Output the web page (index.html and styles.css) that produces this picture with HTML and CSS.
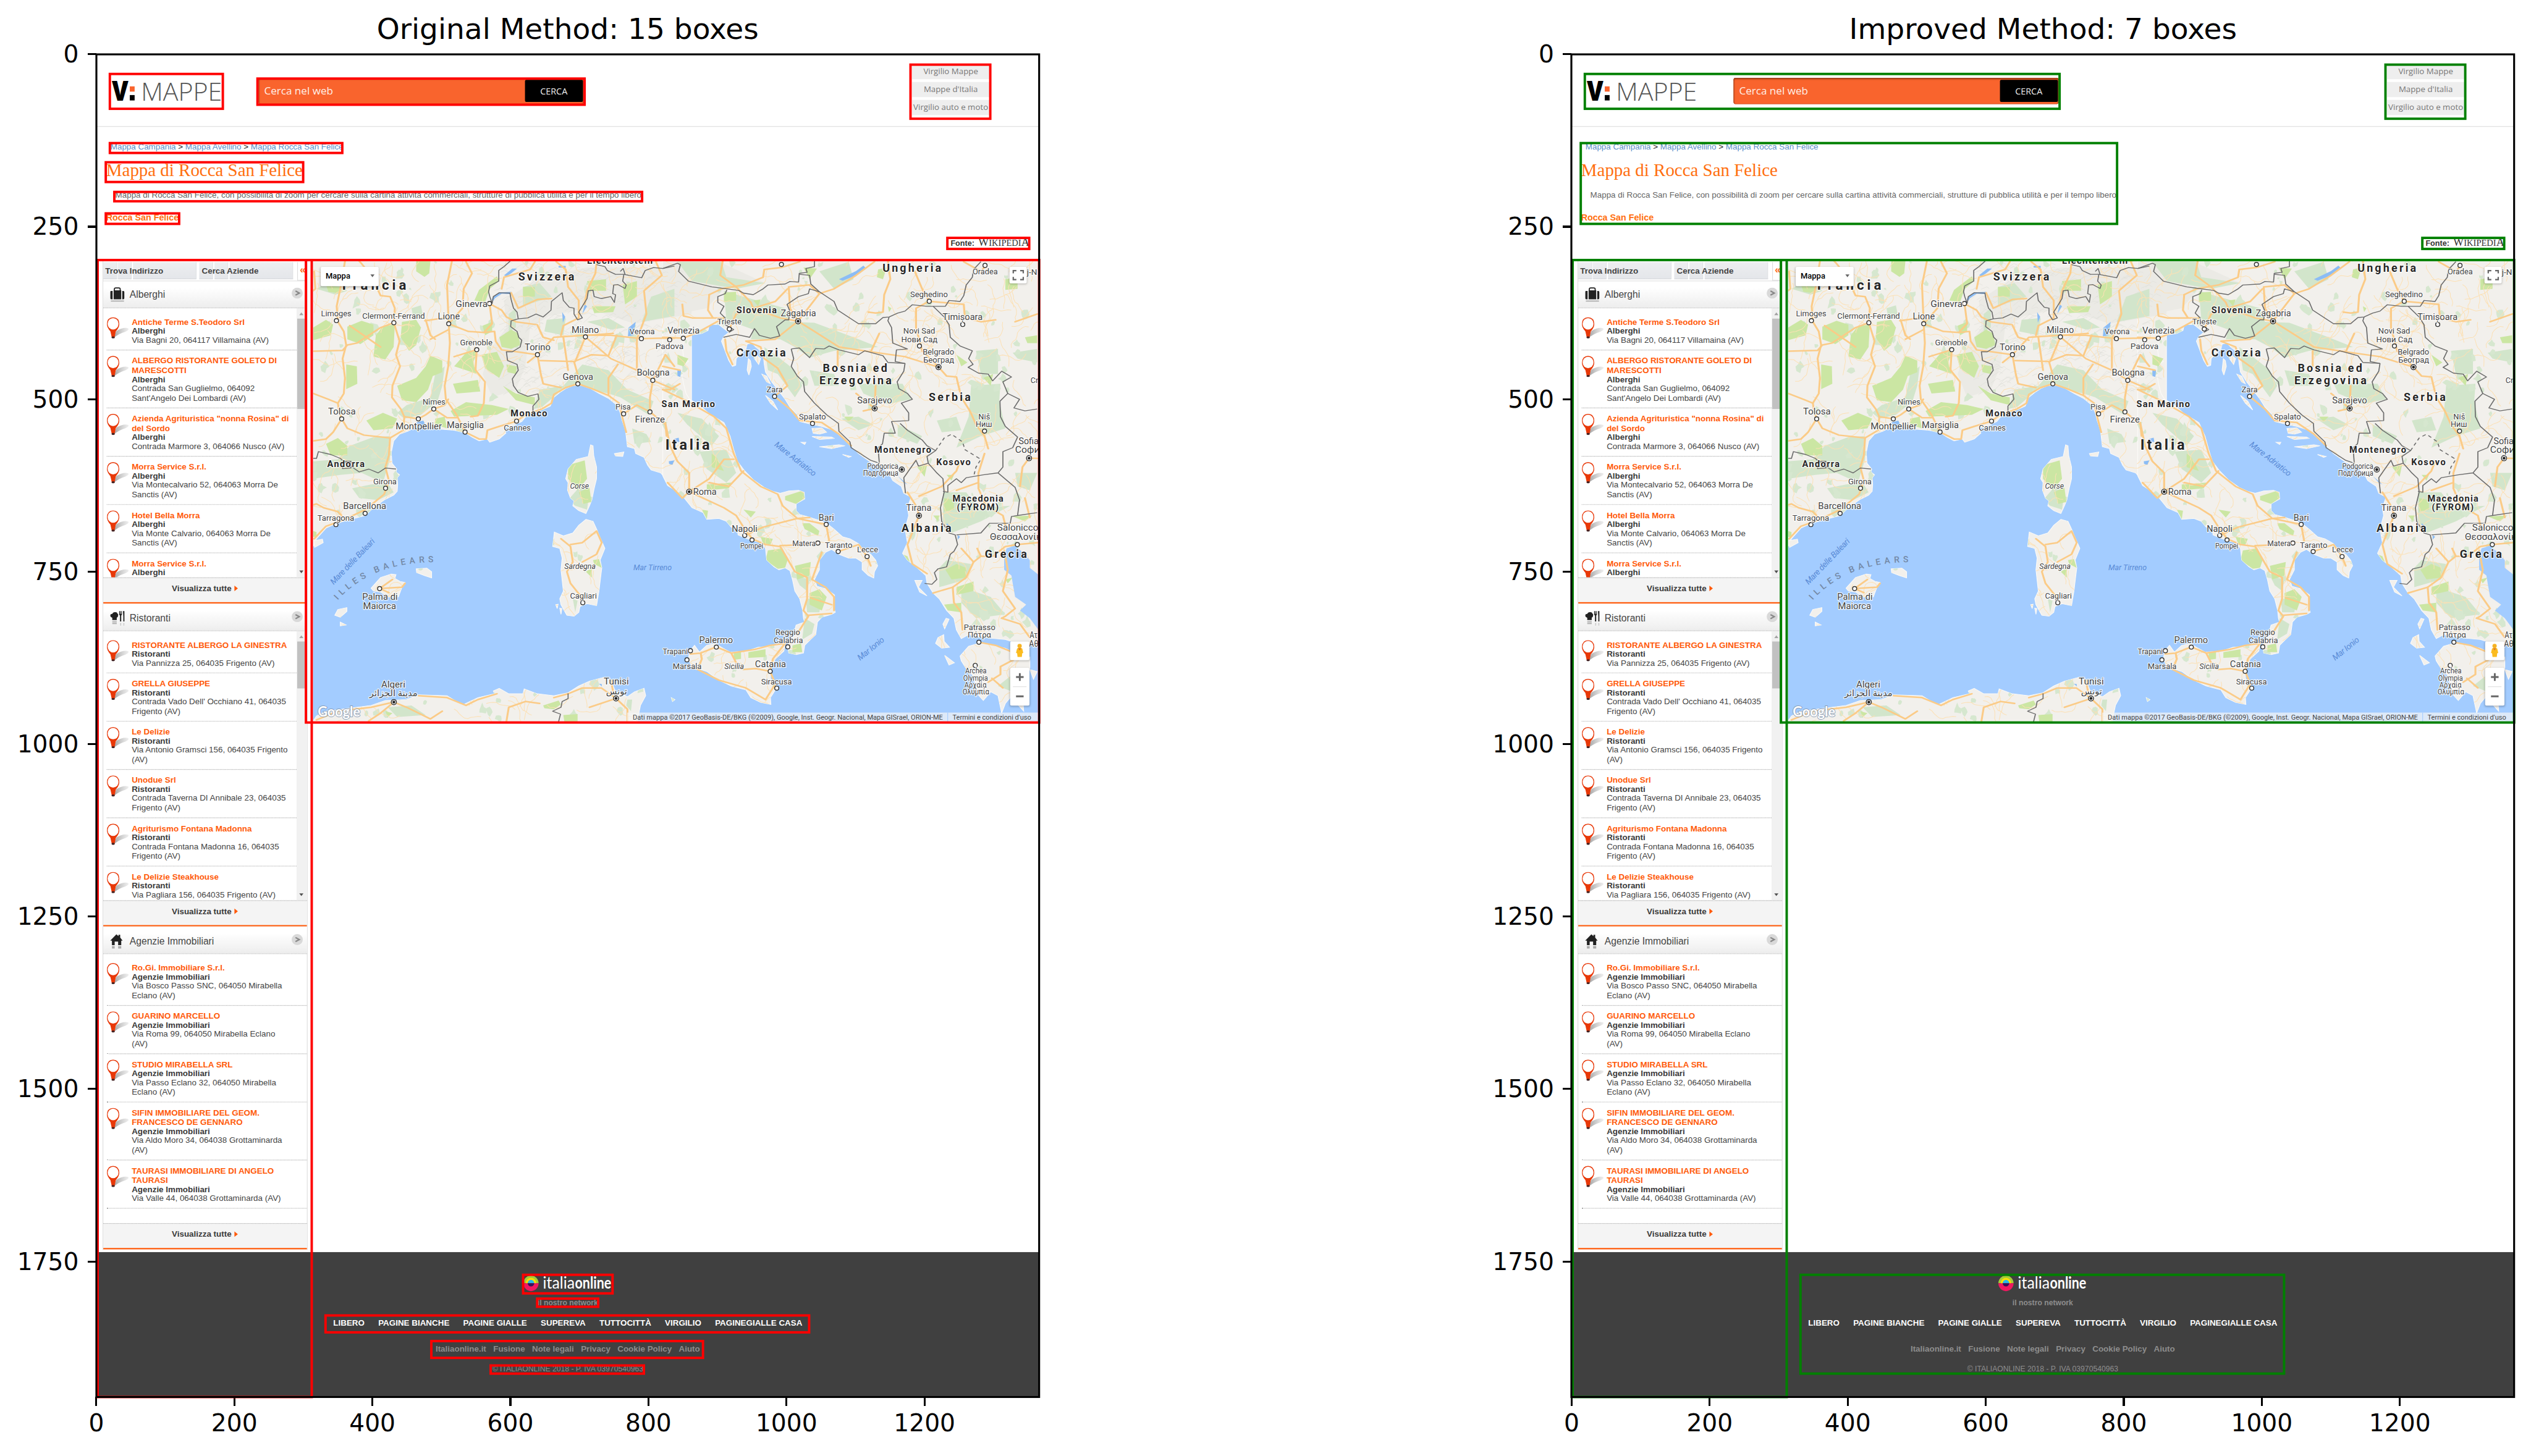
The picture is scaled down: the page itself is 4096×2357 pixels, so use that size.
FILE: index.html
```html
<!DOCTYPE html>
<html lang="en">
<head>
<meta charset="utf-8">
<title>Box detection comparison</title>
<link rel="stylesheet" href="styles.css">
</head>
<body>
<main class="figure" id="figure"></main>

<template id="chart-template">
  <section class="chart">
    <h1 class="chart-title"></h1>
    <div class="y-axis"></div>
    <div class="plot">
      <div class="page">
        <header class="site-header">
          <svg class="brand" viewBox="0 0 164 34" width="164" height="34">
            <text class="brand-v" x="0.4" y="30.9" textLength="24" lengthAdjust="spacingAndGlyphs">V</text>
            <rect x="26.4" y="10.4" width="7" height="7.6" fill="#fa642d"/>
            <rect x="26.4" y="23" width="7" height="7.8"/>
            <text class="brand-name" x="42.6" y="30.9" textLength="117.4" lengthAdjust="spacingAndGlyphs">MAPPE</text>
          </svg>
          <div class="search"><span class="search-text">Cerca nel web</span><span class="search-button">CERCA</span></div>
          <nav class="top-links"><a>Virgilio Mappe</a><a>Mappe d'Italia</a><a>Virgilio auto e moto</a></nav>
        </header>
        <section class="intro">
          <p class="crumbs"><a>Mappa Campania</a> &gt; <a>Mappa Avellino</a> &gt; <a>Mappa Rocca San Felice</a></p>
          <h2>Mappa di Rocca San Felice</h2>
          <p class="summary">Mappa di Rocca San Felice, con possibilità di zoom per cercare sulla cartina attività commerciali, strutture di pubblica utilità e per il tempo libero.</p>
          <p class="place">Rocca San Felice</p>
          <p class="source"><b>Fonte:</b><span class="wiki"><big>W</big>IKIPEDI<big>A</big></span></p>
        </section>
        <div class="content">
          <aside class="sidebar">
            <div class="tabs">
              <div class="tab"><i></i><i></i><i></i><span>Trova Indirizzo</span></div>
              <div class="tab"><i></i><i></i><i></i><span>Cerca Aziende</span></div>
              <div class="collapse">«</div>
            </div>
            <div class="groups"></div>
          </aside>
          <div class="map"></div>
        </div>
        <footer class="site-footer">
          <svg class="io-logo" viewBox="0 0 130 24" width="130" height="24">
            <path d="M0.7 11a11 11 0 0 1 22 0z" fill="#a4cc39"/><path d="M0.7 11a11 11.6 0 0 0 22 0z" fill="#f01860"/>
            <path d="M4.2 11a7.5 7.5 0 0 1 15 0z" fill="#ffe000"/><path d="M6.9 11a4.8 4.8 0 0 1 9.6 0z" fill="#25b9ea"/>
            <path d="M6.9 11a4.8 4.8 0 0 0 9.6 0z" fill="#33145a"/>
            <text x="29" y="18.8" textLength="46" lengthAdjust="spacingAndGlyphs" font-weight="400">italia</text>
            <text x="75.500" y="18.8" textLength="52.500" lengthAdjust="spacingAndGlyphs" font-weight="700">online</text>
          </svg>
          <p class="network">il nostro network</p>
          <nav class="portals"><a>LIBERO</a><a>PAGINE BIANCHE</a><a>PAGINE GIALLE</a><a>SUPEREVA</a><a>TUTTOCITTÀ</a><a>VIRGILIO</a><a>PAGINEGIALLE CASA</a></nav>
          <nav class="legal"><a>Italiaonline.it</a><a>Fusione</a><a>Note legali</a><a>Privacy</a><a>Cookie Policy</a><a>Aiuto</a></nav>
          <p class="copyright">© ITALIAONLINE 2018 - P. IVA 03970540963</p>
        </footer>
      </div>
      <svg class="boxes" viewBox="0 0 1366 1946"></svg>
    </div>
    <div class="x-axis"></div>
  </section>
</template>
<script src="app.js"></script>
</body>
</html>
```
FILE: styles.css
```css
* { box-sizing: border-box; }
body { margin: 0; background: #fff; color: #000; font-family: "DejaVu Sans", sans-serif; overflow: hidden; }
p, h1, h2 { margin: 0; font-weight: 400; }

/* figure and axes */
.figure { width: 4096px; height: 2357px; display: flex; gap: 706px; overflow: hidden; }
.chart { flex: none; display: grid; grid-template: 87.8px 2173.5px 95px / 155.9px 1525.7px; }
.chart-title { grid-column: 2; font-size: 47.06px; line-height: 56px; padding-top: 19px; text-align: center; white-space: nowrap; }
.y-axis { grid-column: 1; grid-row: 2; display: flex; flex-direction: column; margin-top: -139.6px; }
.y-axis span { flex: none; height: 279.2px; display: flex; align-items: center; justify-content: flex-end; gap: 14.500px; font-size: 39.2px; }
.y-axis span::after { content: ""; width: 14px; height: 3.1px; background: #000; }
.plot { grid-column: 2; grid-row: 2; position: relative; }
.x-axis { grid-column: 2; grid-row: 3; display: flex; margin-left: -111.7px; }
.x-axis span { flex: none; width: 223.38px; display: flex; flex-direction: column; align-items: center; font-size: 39.2px; line-height: 46px; gap: 5px; }
.x-axis span::before { content: ""; width: 3.1px; height: 15px; background: #000; }
.boxes { position: absolute; left: 0; top: 0; width: 1525.7px; height: 2173.5px; overflow: visible; }
.boxes rect { fill: none; stroke-width: 3.5; }
.boxes .original { stroke: #f00; }
.boxes .improved { stroke: #008000; }
.boxes .spine { stroke: #000; stroke-width: 2.8; }

/* captured page */
.page { width: 1366px; height: 1946px; overflow: hidden; transform: scale(1.1169); transform-origin: 0 0; font-family: "Liberation Sans", Arial, sans-serif; font-size: 12px; line-height: 14px; }
.site-header { height: 105px; border-bottom: 1px solid #dedede; display: flex; align-items: flex-start; font-family: "Open Sans", sans-serif; }
.brand { margin: 36px 0 0 22px; flex: none; }
.brand-v { font: 800 39px "Open Sans", sans-serif; }
.brand-name { font: 300 36.5px "Open Sans", sans-serif; fill: #555; }
.search { margin: 34px 0 0 49px; width: 471px; height: 38px; border-radius: 3px; background: #f9642d; box-shadow: inset 0 2px 2px #9c3c17, inset 1px 0 1px #b24a20, inset -1px 0 1px #b24a20; display: flex; padding: 2.8px 1px 0 8px; justify-content: space-between; }
.search-text { color: #fff0e8; font-size: 15.3px; line-height: 31.500px; }
.search-button { width: 84.5px; height: 32.6px; background: #000; color: #eee; border-radius: 2px; font-size: 12.9px; line-height: 32.500px; text-align: center; }
.top-links { margin: 14px 72.4px 0 auto; width: 111.4px; display: flex; flex-direction: column; gap: 3.6px; }
.top-links a { height: 22.4px; background: #eee; color: #777; font-size: 11.9px; line-height: 21.800px; text-align: center; white-space: nowrap; }
.intro { height: 194px; padding-top: 22.2px; white-space: nowrap; }
.crumbs { padding-left: 20.4px; color: #222; }
.crumbs a { color: #5c8fc8; }
.intro h2 { margin: 12.3px 0 0 14.2px; font: 25.9px/30px "Liberation Serif", serif; color: #ff6f0f; }
.summary { margin: 13.7px 0 0 27.4px; color: #666; }
.place { margin: 19.2px 0 0 14px; font-size: 12.8px; font-weight: 700; color: #ff6f0f; }
.source { margin: 21.2px 14.2px 0 0; height: 16px; display: flex; justify-content: flex-end; align-items: baseline; gap: 5.500px; font-size: 11.3px; color: #333; }
.wiki { font: 13px/14px "Liberation Serif", serif; }
.wiki big { font-size: 16.300px; line-height: 14px; }

/* sidebar */
.content { height: 1436.5px; display: flex; }
.sidebar { margin-left: 8.5px; width: 297px; height: 1434px; flex: none; border: solid #ddd; border-width: 0 1.3px 0 1px; }
.tabs { height: 30px; display: flex; gap: 4.2px; padding-top: 2px; border-bottom: 1.5px solid #ddd; font-weight: 700; color: #444; }
.tab { position: relative; height: 25.4px; width: 135.7px; display: flex; gap: 1.9px; }
.tab i { width: 20px; background: linear-gradient(#edeef0, #e4e6ea); border-right: 1px solid #dcdee2; border-bottom: 1px solid #d6d8dc; }
.tab i:nth-child(3) { flex: 1; }
.tab span { position: absolute; left: 3.3px; top: 6.2px; white-space: nowrap; }
.collapse { margin-left: 1.500px; flex: 1; border-left: 1px solid #ddd; border-bottom: 1px solid #ddd; color: #ff6a1a; font-size: 15px; line-height: 22px; padding-left: 3px; }
.group-head { height: 39.8px; display: flex; align-items: center; background: linear-gradient(#fff 25%, #ededed); border-bottom: 1px dotted #aaa; padding: 4px 5.8px 0 10.2px; font-size: 14px; color: #444; }
section:first-child > .group-head { height: 38.5px; padding-top: 1.4px; }
.group-head svg { flex: none; }
.group-head .ico { margin-right: 7.500px; }
.group-head .go { margin: -5px 0 0 auto; }
.list { height: 390.4px; overflow: hidden; padding-left: 5.4px; display: flex; }
.items { flex: 1; padding-top: 5.2px; }
.item { display: flex; gap: 4px; padding: 8px 0 7px; border-bottom: 1px dotted #aaa; white-space: nowrap; color: #444; }
.item svg { flex: none; margin: 0.5px 0 -20px 0; }
.item b { display: block; color: #ff5a0a; }
.item strong { display: block; line-height: 12px; color: #3a3a3a; }
.scroll { width: 14.6px; flex: none; background: #f1f1f1; display: flex; flex-direction: column; align-items: center; padding: 6.5px 0 6px; }
.scroll::before { content: ""; border: solid transparent; border-width: 0 3.500px 4px; border-bottom-color: #a3a3a3; }
.scroll::after { content: ""; margin-top: auto; border: solid transparent; border-width: 4px 3.500px 0; border-top-color: #505050; }
.scroll i { margin-top: 4.500px; width: 12.8px; background: #c1c1c1; }
.more { height: 37.9px; background: #f4f4f4; border-top: 1px dotted #aaa; border-bottom: 2px solid #ff5a0a; display: flex; justify-content: center; align-items: center; gap: 4px; padding: 0 0 5.500px 0; font-weight: 700; color: #3a3a3a; }
.more::after { content: ""; border: solid transparent; border-width: 4px 0 4px 5px; border-left-color: #ff5a0a; }

/* map */
.map { position: relative; margin-left: 8.8px; width: 1051.7px; height: 668px; overflow: hidden; background: #a3ccff; }
.map > svg { display: block; }
.land { fill: #f2f0ec; stroke: #fbfaf8; stroke-width: 3; }
.park { fill: #cbe6a3; }
.wood { fill: #d2e5cb; }
.relief { fill: #ebeae5; }
.lake { fill: #8bbcf5; }
.lane { fill: none; stroke: #fce0b4; stroke-width: .9; }
.speck { fill: #d6e7cf; }
.shade { fill: none; stroke: #e0dfda; stroke-width: 2; }
.road { fill: none; stroke: #fbcb87; stroke-width: 8; stroke-linejoin: round; stroke-linecap: round; }
.border { fill: none; stroke: #6b6b6b; stroke-width: 4.300; stroke-linejoin: round; }
.dashed { stroke-dasharray: 16 14; }
.city { fill: #fff; stroke: #333; stroke-width: 1.3; }
.label { font-family: Roboto, "DejaVu Sans", sans-serif; fill: #444; stroke: #fff; stroke-width: 2.2; stroke-opacity: .85; paint-order: stroke; stroke-linejoin: round; }
.label.bold { font-weight: 700; fill: #262626; }
.label.ital { font-style: italic; }
.label.sea { font-style: italic; fill: #5a8bd6; stroke: none; }
.label.arc { fill: #7388a5; stroke: none; font-weight: 500; }
.label.logo { fill: #fff; stroke: #7f93ad; stroke-width: 1.800; font-family: Lato, sans-serif; font-weight: 700; }
.ctl { position: absolute; background: #fff; border-radius: 2px; box-shadow: 0 1px 3px rgba(0,0,0,.25); font-family: Roboto, sans-serif; }
.ctl svg { display: block; }
.type { left: 10.4px; top: 8.6px; width: 84.6px; height: 28px; display: flex; align-items: center; justify-content: space-between; padding: 0 6px 1px 7.500px; font-size: 11.6px; font-weight: 500; }
.type::after { content: ""; border: solid transparent; border-width: 4.200px 3.800px 0; border-top-color: #666; }
.full { left: 1008.7px; top: 8.6px; width: 25.2px; height: 24px; }
.peg { left: 1010.1px; top: 551.6px; width: 27.7px; height: 27.6px; }
.zoom { left: 1010.1px; top: 589.8px; width: 27.7px; height: 54.8px; }
.credits { position: absolute; right: 0; bottom: 0; width: 597px; height: 12.8px; display: flex; background: rgba(245,245,245,.7); font: 9.9px/13px Roboto, sans-serif; color: #444; white-space: nowrap; }
.credits span { width: 465.500px; text-align: right; padding-right: 7px; border-right: 1px solid #a3ccff; }
.credits em { flex: 1; font-style: normal; padding-left: 6px; }

/* footer */
.site-footer { height: 211px; background: #404040; color: #8d8d8d; display: flex; flex-direction: column; align-items: center; padding-top: 34.500px; white-space: nowrap; }
.io-logo { flex: none; }
.io-logo text { font-family: Lato, sans-serif; font-size: 23.500px; fill: #fff; }
.network { margin-top: 7.5px; font-size: 10.9px; font-weight: 700; }
.portals { margin-top: 16.500px; display: flex; gap: 19.900px; font-weight: 700; color: #fff; }
.legal { margin-top: 23px; display: flex; gap: 10.200px; font-weight: 700; }
.copyright { margin-top: 15.400px; font-size: 10.9px; }
```
FILE: app.js
```js
/* ---- sidebar data ---- */
const ICONS = {
  bag: '<svg class="ico" width="21" height="23" viewBox="0 0 21 23"><path d="M6 6V3.500Q6 1.500 8 1.500h4.500q2 0 2 2V6" fill="none" stroke="#222" stroke-width="1.600"/><path d="M1 6h2.500v12H1.500Q0 18 0 16V7.500Q0 6 1 6zM5 5h11v13H5zM17.500 6H19q1.500 0 1.500 1.500V16q0 2-1.500 2h-1.500z" fill="#222"/><path d="M1 20.500h19" stroke="#aaa" stroke-width="1.500"/></svg>',
  food: '<svg class="ico" width="21" height="23" viewBox="0 0 21 23"><path d="M3 14V10.500Q0 9.500 0 7.500 0 5 3 5 4 2 7 2.500q3-.5 3.500 2Q12 5 11.500 7.500q0 2-2 3V14z" fill="#222"/><path d="M13 1v5l1.200 1.500V16h1.800V7.500L17 6V1h-.8v4h-.6V1h-.8v4h-.6V1zM18.500 1h2.200v15h-1.700V9z" fill="#222"/><path d="M3 16.500h6.500M3 19h6.500" stroke="#aaa" stroke-width="1.500"/><path d="M15.200 18v4M19.800 18v4" stroke="#ccc" stroke-width="1.500"/></svg>',
  house: '<svg class="ico" width="21" height="23" viewBox="0 0 21 23"><path d="M0 10.500 9 1.500l3 2.500V2h2.500v4L18 10.500H16V17h-4.500v-5h-5v5H2.500v-6.500z" fill="#222"/><path d="M2.500 18.500h4v3.500h-4zM11.500 18.500h4.500v3.500h-4.500z" fill="#aaa"/></svg>'
};
const GO = '<svg class="go" width="16" height="16" viewBox="0 0 16 16"><circle cx="8" cy="8" r="8" fill="#d9d9d9"/><path d="M5.500 5 11 8l-5.500 3" fill="none" stroke="#888" stroke-width="2"/></svg>';
const PIN = '<svg width="32.300" height="31" viewBox="0 0 32.300 31"><defs><linearGradient id="sh"><stop offset="0" stop-color="#888" stop-opacity=".8"/><stop offset="1" stop-color="#bbb" stop-opacity=".25"/></linearGradient></defs><path d="M10 30 14 20Q24 14 31 16q2.500 2-4 5Q18 23.500 10 30z" fill="url(#sh)"/><path d="M9.200 0Q18.200 .5 18.200 10q0 5-5 10.500L11.400 29h-4.200L5.300 20.500Q.3 15 .3 10 .3 .5 9.200 0z" fill="#e83808"/><ellipse cx="9.200" cy="9.500" rx="7.900" ry="8.300" fill="#fff"/><ellipse cx="9.300" cy="29.200" rx="2.400" ry="1.500" fill="#422"/></svg>';
const GROUPS = [
  { name: "Alberghi", icon: "bag", thumb: 131.5, items: [
    ["Antiche Terme S.Teodoro Srl", "Via Bagni 20, 064117 Villamaina (AV)"],
    ["ALBERGO RISTORANTE GOLETO DI<br>MARESCOTTI", "Contrada San Guglielmo, 064092<br>Sant'Angelo Dei Lombardi (AV)"],
    ["Azienda Agrituristica \"nonna Rosina\" di<br>del Sordo", "Contrada Marmore 3, 064066 Nusco (AV)"],
    ["Morra Service S.r.l.", "Via Montecalvario 52, 064063 Morra De<br>Sanctis (AV)"],
    ["Hotel Bella Morra", "Via Monte Calvario, 064063 Morra De<br>Sanctis (AV)"],
    ["Morra Service S.r.l.", ""]] },
  { name: "Ristoranti", icon: "food", thumb: 68.6, items: [
    ["RISTORANTE ALBERGO LA GINESTRA", "Via Pannizza 25, 064035 Frigento (AV)"],
    ["GRELLA GIUSEPPE", "Contrada Vado Dell' Occhiano 41, 064035<br>Frigento (AV)"],
    ["Le Delizie", "Via Antonio Gramsci 156, 064035 Frigento<br>(AV)"],
    ["Unodue Srl", "Contrada Taverna DI Annibale 23, 064035<br>Frigento (AV)"],
    ["Agriturismo Fontana Madonna", "Contrada Fontana Madonna 16, 064035<br>Frigento (AV)"],
    ["Le Delizie Steakhouse", "Via Pagliara 156, 064035 Frigento (AV)"]] },
  { name: "Agenzie Immobiliari", icon: "house", thumb: 0, items: [
    ["Ro.Gi. Immobiliare S.r.l.", "Via Bosco Passo SNC, 064050 Mirabella<br>Eclano (AV)"],
    ["GUARINO MARCELLO", "Via Roma 99, 064050 Mirabella Eclano<br>(AV)"],
    ["STUDIO MIRABELLA SRL", "Via Passo Eclano 32, 064050 Mirabella<br>Eclano (AV)"],
    ["SIFIN IMMOBILIARE DEL GEOM.<br>FRANCESCO DE GENNARO", "Via Aldo Moro 34, 064038 Grottaminarda<br>(AV)"],
    ["TAURASI IMMOBILIARE DI ANGELO<br>TAURASI", "Via Valle 44, 064038 Grottaminarda (AV)"]] }
];
const groupHtml = g => `<section><div class="group-head">${ICONS[g.icon]}${g.name}${GO}</div>
  <div class="list"><div class="items">${g.items.map(i => `<div class="item">${PIN}<div><b>${i[0]}</b><strong>${g.name}</strong>${i[1]}</div></div>`).join("")}</div>
  ${g.thumb ? `<div class="scroll"><i style="height:${g.thumb}px"></i></div>` : ""}</div><div class="more">Visualizza tutte</div></section>`;

/* ---- map data: a west and an east sheet share one vertical scale ---- */
const SHEET = { w: { k: .3439, o: 298.6 }, e: { k: .3546, o: 820.9 } };
const KY = .2808, OY = 283.7;
const px = (s, x) => x * SHEET[s].k + SHEET[s].o;
const py = y => y * KY + OY;
const matrix = s => `matrix(${SHEET[s].k} 0 0 ${KY} ${SHEET[s].o} ${OY})`;

const LAND = {
  w: ["46,40 1640,40 1640,1290 1568,1235 1545,1215 1535,1185 1510,1150 1470,1135 1455,1110 1440,1070 1405,1050 1400,1025 1370,1015 1362,930 1348,880 1340,840 1325,800 1290,765 1250,740 1215,715 1175,698 1140,700 1110,715 1085,735 1060,760 1045,805 1010,825 970,835 940,862 925,885 890,905 850,920 858,945 830,975 790,992 780,975 745,985 715,965 690,945 640,930 590,925 560,920 520,900 500,890 480,910 445,935 410,950 385,985 375,1045 378,1100 398,1130 395,1145 410,1160 400,1175 402,1210 400,1245 385,1265 345,1290 300,1330 265,1370 205,1390 145,1410 100,1435 60,1490 46,1530",
    "1215,1005 1225,1010 1228,1060 1240,1120 1240,1180 1230,1230 1220,1290 1210,1320 1195,1360 1165,1345 1140,1320 1145,1295 1130,1280 1118,1240 1120,1200 1110,1180 1120,1130 1155,1080 1205,1065",
    "1195,1390 1225,1400 1240,1440 1250,1470 1275,1540 1255,1600 1262,1640 1250,1760 1240,1835 1200,1825 1170,1840 1165,1870 1145,1890 1115,1885 1090,1830 1085,1800 1100,1760 1090,1650 1095,1590 1085,1540 1055,1530 1062,1455 1100,1475 1140,1460 1165,1420",
    "290,1745 330,1690 375,1672 395,1675 390,1695 412,1710 433,1715 420,1740 405,1790 360,1790 330,1765 300,1760",
    "480,1645 525,1642 545,1660 545,1692 515,1680 482,1665", "137,1885 150,1855 188,1845 188,1865 160,1895", "160,1920 185,1935 160,1940",
    "1315,1050 1355,1042 1350,1065 1320,1062", "1068,1830 1078,1828 1074,1850", "1085,1848 1094,1850 1090,1880", "48,1500 85,1492 88,1510 52,1535",
    "46,2430 60,2405 100,2380 200,2365 290,2350 350,2325 440,2320 490,2295 610,2300 650,2330 680,2345 740,2310 810,2290 805,2275 830,2262 870,2290 930,2290 935,2265 990,2290 1060,2300 1120,2285 1165,2250 1210,2225 1270,2205 1300,2220 1320,2280 1370,2305 1400,2280 1440,2262 1447,2300 1425,2350 1410,2440 46,2440"],
  e: ["0,40 1560,40 1560,2045 1500,2040 1450,2030 1400,2010 1310,2000 1250,1985 1220,2005 1200,1960 1190,1900 1160,1860 1130,1800 1105,1770 1080,1720 1075,1680 1040,1640 1000,1600 980,1565 1000,1510 990,1440 1005,1370 1000,1330 1015,1275 985,1255 975,1220 940,1190 930,1165 900,1120 850,1095 800,1050 770,1010 730,965 700,930 650,910 610,900 560,885 550,850 520,810 500,770 470,720 445,680 420,630 415,590 410,530 380,500 365,480 345,485 340,510 315,540 300,560 298,595 285,600 270,570 255,520 240,470 250,445 270,425 245,400 230,385 190,385 185,415 160,430 110,440 85,470 80,500 85,550 105,575 85,590 78,640 85,690 95,740 110,770 150,800 190,845 250,890 275,960 290,1030 305,1090 335,1140 370,1185 415,1225 450,1245 480,1255 515,1243 555,1240 578,1250 580,1285 545,1310 545,1345 560,1365 590,1375 640,1395 670,1410 700,1440 735,1480 765,1490 800,1515 815,1540 850,1570 870,1600 878,1630 865,1660 862,1693 840,1680 815,1650 815,1610 790,1590 760,1590 720,1570 690,1545 665,1560 640,1600 640,1650 620,1700 630,1735 670,1750 702,1780 700,1850 705,1870 690,1880 650,1895 632,1920 625,1985 600,2015 580,2040 575,2080 545,2088 515,2080 510,2040 530,2000 560,1970 540,1960 545,1935 580,1920 575,1900 572,1860 560,1800 540,1760 530,1700 520,1655 500,1640 475,1650 455,1635 425,1600 420,1540 400,1510 370,1500 335,1485 308,1470 305,1440 280,1430 260,1400 230,1385 180,1390 165,1355 120,1330 85,1275 50,1240 20,1215 0,1165",
    "105,2110 110,2070 130,2040 150,2075 180,2040 215,2030 240,2050 275,2075 340,2070 390,2050 440,2045 500,2030 495,2070 460,2110 440,2160 440,2210 465,2260 440,2310 442,2345 400,2335 360,2310 340,2270 280,2250 230,2220 180,2175 120,2150",
    "1215,2095 1250,2045 1290,2030 1330,2035 1400,2055 1440,2080 1500,2100 1500,2160 1480,2250 1470,2300 1475,2380 1440,2330 1420,2310 1400,2340 1385,2390 1370,2300 1340,2280 1310,2325 1285,2290 1270,2200 1240,2160 1220,2120",
    "1030,1705 1060,1705 1045,1740 1080,1785 1050,1765", "1115,2030 1125,2000 1148,1985 1150,2020 1172,2050 1140,2055", "1152,2092 1192,2130 1170,2142", "1145,1930 1158,1900 1170,1905 1152,1955",
    "350,560 358,570 362,600 352,645 345,620", "370,530 400,560 392,590 375,560", "405,640 425,650 440,690 425,680", "420,750 450,780 470,825 440,790", "610,920 650,918 670,940 640,950 615,945", "610,962 690,965 700,972 640,978", "640,1015 720,1005 745,1010 690,1025", "565,992 585,992 580,1003", "735,1055 770,1065 760,1070", "35,2310 50,2320 40,2330", "1500,2165 1530,2175 1515,2215"]
};
const SEA = { w: [], e: ["1405,1540 1440,1525 1470,1560 1500,1600 1500,1640 1535,1675 1535,1960 1500,1900 1460,1860 1485,1830 1440,1790 1430,1720 1425,1680 1395,1650 1395,1580"] };
const RELIEF = { w: ["850,260 1000,140 1200,90 1420,90 1640,100 1640,330 1400,380 1200,300 1040,340 960,400 940,600 900,720 800,760 760,640 800,500 860,400"], e: ["0,60 230,60 420,170 250,200 180,300 60,330 0,300"] };
const WOOD = {
  w: ["200,1010 300,965 370,960 370,1080 340,1200 250,1150 160,1160 46,1180 46,1090 150,1080", "400,840 440,800 540,760 560,640 600,600 590,700 570,780 500,850 430,870", "1180,590 1290,620 1370,720 1480,780 1460,850 1340,760 1290,740 1220,720 1100,715 1010,810 975,820 1000,720 1100,700", "210,1230 290,1210 360,1200 385,1250 320,1290 240,1280", "460,300 500,285 510,350 470,360", "1030,360 1110,350 1100,440 1020,420", "1200,370 1290,350 1360,400 1300,410", "1430,370 1470,240 1568,200 1568,340", "1120,1290 1170,1220 1210,1250 1200,1340 1150,1320", "360,2360 460,2350 520,2400 400,2410", "1370,2320 1390,2320 1385,2380 1365,2350", "1140,1800 1160,1810 1150,1870", "930,190 1000,170 1050,240 930,290", "60,200 120,160 190,210 140,230", "870,330 900,300 900,400 870,420", "1390,920 1450,950 1470,990 1400,1000"],
  e: ["250,210 330,240 500,300 520,370 620,375 780,450 880,500 700,520 600,555 540,500 480,460 360,460 370,410 260,360", "800,690 980,690 1015,770 920,795 820,740", "415,500 480,560 540,620 570,700 540,760 470,640 430,620", "1260,700 1380,690 1375,780 1400,920 1300,960 1200,1020 1250,860", "1145,1250 1240,1250 1290,1330 1420,1320 1300,1400 1180,1460 1145,1400", "1130,1640 1160,1600 1260,1620 1240,1700 1130,1740", "1220,1740 1340,1790 1400,1880 1280,1900 1220,1820", "60,60 240,60 260,140 420,170 300,200 120,160", "580,1900 620,1930 610,1980 570,2010", "585,1800 650,1800 640,1870 590,1870", "60,840 160,870 230,960 200,1010 100,900", "150,1040 260,1030 300,1150 260,1200 180,1130", "540,1680 600,1700 590,1760 560,1730", "560,430 640,400 760,460 700,480", "600,620 700,640 720,700 620,700", "1280,520 1370,510 1370,640 1300,640", "1430,530 1530,510 1530,580 1450,560", "730,870 800,860 860,900 800,930", "960,900 1060,960 1040,1000 960,960", "1370,2250 1420,2200 1430,2280", "640,110 760,60 780,150 700,200", "1120,880 1200,860 1220,930 1140,940", "1440,1150 1530,1150 1500,1240 1450,1220"]
};
const PARK = {
  w: ["480,57 540,57 535,120 515,138 480,110", "190,395 250,365 300,385 300,440 245,485 190,460", "46,400 100,360 130,385 120,440 46,465", "310,440 340,392 390,385 385,500 350,565 300,550", "420,370 480,360 500,400 480,490 450,520 415,450", "185,590 230,600 232,690 185,718", "400,700 480,660 520,600 540,545 590,570 590,630 550,650 530,720 480,785 420,775", "745,205 820,135 830,160 790,200 770,270 725,260", "640,600 690,530 740,520 720,580 735,640 690,620", "755,540 820,525 850,600 830,660 770,610", "830,450 880,410 910,430 918,490 880,510 840,500", "635,690 740,670 750,730 650,740", "625,830 690,785 800,800 870,820 820,850 640,860", "270,880 340,840 400,870 380,920 300,930", "100,1000 150,970 190,1010 190,1060 120,1060", "845,700 900,740 980,760 980,800 900,775", "1120,1110 1190,1085 1200,1180 1160,1240 1120,1180", "1165,1250 1210,1225 1218,1300 1185,1310", "1225,1600 1250,1595 1262,1640 1230,1620", "1195,1660 1220,1640 1220,1690", "1350,180 1410,160 1410,240 1360,280", "1200,160 1280,150 1280,210 1210,210", "930,190 980,190 980,240 930,240", "560,870 600,860 610,920 560,900", "100,180 160,190 150,222 110,215", "1015,2350 1080,2325 1090,2345 1060,2370 1020,2365", "1100,2400 1160,2395 1160,2440 1105,2440", "1220,290 1320,290 1310,320 1230,325", "760,390 800,370 800,420 770,440", "350,2380 380,2390 360,2410", "860,590 905,600 900,640 865,630", "46,1450 60,1455 60,1480 46,1480"],
  e: ["500,1270 575,1240 580,1280 545,1310 500,1290", "570,1410 600,1410 640,1450 635,1475 580,1440", "430,1550 490,1540 510,1600 500,1640 470,1645 420,1600", "540,1630 605,1610 600,1680 550,1700", "400,1480 450,1490 440,1520 410,1515", "600,1770 640,1750 670,1790 650,1860 600,1830", "290,2070 320,2075 320,2110 290,2115", "350,2075 420,2060 420,2100 350,2105", "530,2040 565,2030 570,2075 530,2075", "200,1050 220,1070 250,1140 200,1120", "180,1210 280,1200 270,1230 180,1240", "60,540 105,560 85,600 60,590", "250,220 300,215 300,260 250,270", "880,100 915,90 900,150 875,140", "740,860 780,860 760,885", "1200,540 1245,580 1220,600", "1310,660 1350,640 1340,700", "1155,1650 1200,1620 1240,1640 1240,1690 1180,1700", "1200,1740 1270,1710 1270,1760 1200,1780", "1150,1830 1220,1820 1220,1870 1165,1860", "1150,1280 1190,1290 1190,1340 1150,1350", "1105,1370 1130,1370 1125,1400", "980,1570 1000,1580 1010,1610 990,1600", "1400,150 1450,140 1450,200 1400,205", "575,90 630,95 600,150", "1400,1700 1430,1690 1410,1720", "1040,1120 1080,1110 1070,1170", "1160,1160 1190,1160 1180,1190", "160,1340 185,1345 180,1390", "330,1340 380,1350 360,1380", "1430,1375 1510,1370 1480,1400", "1480,450 1530,440 1530,480 1490,480", "920,290 935,300 925,320", "370,260 400,255 390,290"]
};
const LAKE = { w: ["798,255 805,240 830,218 880,216 885,228 840,225 812,248 805,262", "850,130 885,95 905,95 880,120 860,135", "1080,82 1110,82 1110,92 1080,90", "1095,320 1108,345 1098,375", "1375,400 1405,370 1395,440 1372,445", "1200,290 1180,330 1190,280", "480,890 510,880 520,905 490,905", "1545,1090 1568,1085 1560,1105 1545,1102", "1250,2238 1262,2240 1262,2252"], e: ["720,150 790,108 820,80 832,95 790,130 735,158", "45,975 65,968 68,990 50,992", "25,1090 42,1092 40,1108 28,1105", "60,620 75,620 72,655 60,650", "960,1165 1000,1210 985,1200", "1160,1410 1172,1420 1170,1440 1160,1435", "1205,1470 1215,1480 1205,1495"] };
const ROADS = {
  w: ["180,57 160,200 145,290 150,370 175,420 185,490 170,560 180,660 175,740 150,790 155,830 166,871 190,920 260,955 370,970", "46,740 110,770 150,790", "46,522 170,518 190,490 230,480 330,400 386,375 390,300 370,240 330,235 290,130 250,70 240,57", "386,375 410,470 395,540 412,600 380,700 378,760 415,820 430,860", "430,860 489,871 520,850 554,820 600,800 615,770", "617,380 622,480 615,600 600,700 605,770 650,850 686,939", "617,380 610,180 630,60", "690,60 715,120 680,200 675,300 617,380", "617,380 700,420 765,425 800,380 789,276", "765,425 810,420 815,470 840,515 905,525 991,540", "735,514 640,550", "540,460 617,410", "520,360 540,440 560,460", "517,365 600,350", "735,514 730,620 770,680 765,790 740,855 710,860", "554,820 610,865 650,865", "686,939 745,975 775,975 780,930 830,910 903,883 940,850 1010,820 1050,790 1060,745 1110,710 1161,690 1220,715 1290,750 1335,790 1350,870 1365,940", "430,860 425,930 370,970 365,1060 350,1120 365,1190 345,1260 265,1340 170,1395 100,1425 50,1490", "166,871 130,940 100,975 46,985", "950,580 991,540 1060,450 1193,440 1300,440 1429,457 1500,455 1568,455", "991,540 1005,640 1015,690 1090,710", "1003,570 1145,575 1220,540 1290,545 1325,440", "1145,575 1160,640 1161,690", "1193,448 1150,575", "1193,448 1300,560 1410,620 1477,672 1568,720", "1100,450 1120,620", "1410,620 1410,460 1450,330 1440,210 1515,130 1490,60", "1477,672 1465,760 1465,835 1530,900 1535,960", "1330,590 1290,660 1290,750", "1354,845 1410,800 1465,835", "1477,672 1530,540 1568,600", "789,276 840,310 860,345 900,370 990,385 1015,450 1060,465", "840,200 850,140 960,100 980,60", "880,220 910,300 990,255 1050,250", "1070,60 1110,100 1120,190 1165,260 1165,350 1100,390 1090,440", "1240,60 1235,120 1200,210 1190,280", "50,110 55,200 46,210", "200,390 330,500", "46,1315 60,1310 90,1330 150,1350 165,1370", "1200,440 1310,430", "1090,1490 1130,1530 1140,1610 1115,1660 1130,1720 1182,1800", "1130,1520 1180,1510 1240,1450 1262,1510 1240,1570 1180,1610", "326,1747 380,1700", "326,1747 420,1740 433,1720", "326,1747 365,1768", "60,2425 150,2380 290,2360 386,2333 440,2360 490,2390 540,2420 590,2380", "386,2333 330,2390 280,2430", "490,2300 610,2310 690,2350 740,2320 820,2290", "860,2434 870,2360 940,2330 1000,2340", "1060,2310 1120,2290 1180,2260 1260,2260 1322,2314 1370,2370 1370,2434", "1300,2220 1310,2280", "1322,2314 1210,2360"],
  e: ["0,450 84,455 150,420 250,350", "80,280 85,340 120,350 240,350", "190,230 240,200 330,180 410,140 415,100 485,90 560,60", "190,230 185,310 205,350", "245,57 235,130 300,190 360,270 370,300 460,265 510,200", "370,300 300,330 272,407", "370,300 480,350 553,367", "553,367 520,300 515,190 600,180 640,225", "553,367 640,225 700,200 790,130 865,60", "553,367 620,420 720,500 850,525 990,550 1127,604 1160,650 1200,655 1220,760 1255,830 1280,900 1315,960 1330,1025", "553,367 460,460 340,470 400,500 415,560 470,610 510,700 457,755 520,820 560,880 650,890 720,950 770,1010", "850,525 885,430", "715,520 715,600", "920,57 930,150 905,230 900,320 870,325 840,320", "1030,110 1060,200 1089,264 1230,280 1235,350 1300,370 1360,360", "1127,604 1060,520 1035,400 1035,300 1089,264", "1440,370 1530,330", "255,460 260,520 285,590", "0,600 70,620", "70,690 30,720 0,720", "0,720 100,780 210,860 260,920 290,1050 320,1140 400,1220 470,1260 490,1320 550,1385 668,1416 680,1500", "10,890 30,1010 60,1090 108,1150 108,1247", "20,1200 80,1280 108,1247 250,1330 300,1370 335,1440 365,1490 420,1520 480,1530 540,1660 590,1690 590,1800 575,1860 595,1890 550,1980", "335,1473 410,1430 550,1385 600,1380", "480,1525 600,1520", "595,1885 690,1875", "605,1795 690,1830", "650,1560 610,1700 665,1740 700,1790 700,1860", "108,1247 190,1180 250,1080 290,1080", "190,1200 270,1220 330,1140", "717,1556 800,1520 835,1582 850,1630", "113,2085 155,2080 219,2049 280,2080 380,2060 440,2040 500,2030 450,2110 439,2174 460,2240 420,2320", "280,2080 300,2130", "155,2080 160,2110 150,2140", "439,2174 380,2160 330,2165", "120,2150 230,2220 340,2260 420,2320", "1000,1250 1040,1330 1047,1371 1000,1520 1020,1620 1080,1670", "1047,1270 1140,1220 1200,1140 1215,1090", "1315,1050 1290,1150 1290,1230", "1290,1200 1200,1240", "1290,1230 1320,1320 1390,1370 1400,1420", "1449,1520 1400,1530 1350,1580 1300,1580 1270,1610 1240,1690 1185,1740 1105,1770", "1300,1580 1285,1540", "1270,1610 1220,1540", "1185,1740 1190,1820 1220,1870 1225,1960", "1395,1550 1410,1650 1390,1760 1440,1850 1400,1890 1385,1900", "1385,1900 1460,1930 1500,2000", "1449,1520 1530,1510", "1292,2024 1360,2040 1420,2070", "1440,2110 1380,2150 1380,2190 1330,2230", "1345,2210 1390,2260", "1497,1074 1530,1075", "1497,1074 1470,1120 1460,1220", "1480,1280 1500,1380", "820,830 866,817 870,700", "866,817 790,740", "1230,60 1300,110 1320,79"]
};
const BORDERS = {
  w: ["876,57 850,85 828,105 828,160 790,185 785,215 790,240 800,275 805,240 830,220 875,222 880,255 890,300 905,320 910,355 880,365 878,395 905,420 912,450 925,465 918,500 885,525 860,525 865,570 905,590 910,620 885,665 890,700 910,735 950,755 993,742 997,770 972,805 972,835", "910,355 950,350 985,330 1015,345 1048,310 1050,265 1095,220 1100,260 1125,295 1145,300 1145,330 1160,360 1180,350 1165,320 1200,250 1205,210 1225,207 1230,240 1260,250 1300,240 1315,270 1320,230 1308,225 1312,180 1330,178 1360,198 1365,180 1350,160 1355,125 1320,125 1285,105 1275,85 1240,75", "1360,125 1352,95 1340,110", "1355,125 1430,143 1445,105 1480,90 1520,95 1568,82", "46,1075 60,1075 68,1040 120,1055 160,1075 175,1090 240,1145 280,1130 320,1150 350,1125 395,1130", "170,1090 205,1090 205,1125 170,1128 170,1090", "1120,2288 1120,2315 1095,2330 1090,2360 1055,2380 1088,2395 1080,2434"],
  e: ["0,95 60,68 72,75 65,110 105,160 200,190 310,208 330,222 370,230 410,200 430,180 500,175 520,162 555,165 558,120 590,115 585,95 620,85 620,57", "558,125 600,130 605,175 640,215 700,265 715,310 770,355 800,380 870,380 900,348 925,345 960,325 990,315 1020,282 1080,290 1155,290 1170,260 1215,265 1230,235 1240,180 1265,140 1270,100 1300,60", "262,205 255,225 225,240 225,270 250,290 235,325 255,350 255,385 290,410 270,425", "248,450 300,435 355,450 375,405 395,440 440,455 478,443 465,395 500,360 515,360 518,310 508,280 555,240 595,225 600,200 640,215", "525,510 558,505 600,555 625,508 660,510 680,495 720,515 800,540 825,520 900,545 920,580 990,585 985,625 958,680 965,715 1000,740 1020,770 975,790 1005,840 1005,880 935,885 950,945 905,945 898,1000 880,1020 885,1100 850,1085 770,1020 765,990 720,935 718,895 670,850 620,790 580,730 575,680 550,650 525,600 535,560 525,510", "925,345 920,365 935,400 940,480 1000,510 955,515 950,575 990,585", "1105,290 1150,345 1170,385 1175,450 1215,495 1265,520 1250,560 1268,590 1248,605 1290,635 1330,640 1348,675 1385,625 1425,655 1390,680 1410,740 1378,780 1380,860 1400,910 1450,965 1430,1020 1390,1040 1390,1120 1370,1150 1310,1160 1240,1175 1220,1200 1200,1180 1165,1215 1165,1250 1145,1245", "1410,740 1458,770 1435,815 1480,830 1530,820", "970,895 1000,930 1060,980 1080,1010 1115,1035 1080,1065 1085,1100 1045,1115 1035,1085 985,1175 992,1255", "1085,1100 1120,1150 1145,1180 1150,1250 1135,1330 1140,1400 1170,1460 1195,1470 1205,1520 1190,1555 1175,1570 1160,1635 1125,1645 1110,1665 1120,1700 1100,1725 1070,1720", "1370,1150 1440,1225 1458,1290 1450,1370 1425,1375 1420,1410 1335,1410 1300,1460 1200,1470", "1450,1370 1530,1355"]
};
const KOSOVO = "1115,1035 1150,970 1180,950 1225,990 1235,1030 1300,1080 1280,1120 1270,1170";

/* [sheet, text, x start, x end, baseline, size, style] */
const LABELS = [
  ["w","Francia",168,438,205,20,"bold"],["w","Svizzera",910,1146,157,16,"bold"],["w","Liechtenstein",1200,1476,70,13.5,"bold"],["w","Ginevra",646,781,294,13],["w","Limoges",79,207,342,12],["w","Clermont-Ferrand",253,517,353,12],["w","Lione",571,664,356,13.5],["w","Milano",1135,1250,428,13.5],["w","Verona",1379,1485,435,12],["w","Torino",937,1046,516,13.5],["w","Grenoble",665,801,492,12],["w","Genova",1097,1226,669,13.5],["w","Bologna",1409,1548,648,13.5],["w","Nîmes",507,603,798,12],["w","Tolosa",109,225,849,13.5],["w","Monaco",878,1032,858,13,"bold"],["w","Montpellier",393,588,926,13.5],["w","Marsiglia",609,765,919,13.5],["w","Cannes",849,963,933,12],["w","Pisa",1320,1384,823,12],["w","Firenze",1402,1528,889,13.5],["w","Andorra",105,263,1121,13,"bold"],["w","Girona",299,398,1208,12],["w","Corse",1128,1208,1231,12,"ital"],["w","Barcellona",172,354,1336,13.5],["w","Tarragona",64,219,1397,12],["w","Sardegna",1104,1236,1645,11.5,"ital"],["w","Cagliari",1128,1241,1800,12],["w","Mar Tirreno",1395,1557,1652,12,"sea"],["w","Palma di",253,402,1806,13.5],["w","Maiorca",256,396,1853,13.5],["w","Algeri",333,434,2258,13.5],["w","مدينة الجزائر",283,485,2303,13],["w","Tunisi",1270,1376,2243,13.5],["w","تونس",1280,1368,2292,13],["w","Google",65,244,2408,20,"logo"],
  ["e","Ungheria",898,1138,112,16,"bold"],["e","Slovenia",301,466,326,13,"bold"],["e","Zagabria",482,627,340,13.5],["e","Trieste",223,322,384,12],["e","Venezia",19,151,430,13],["e","Padova",-30,85,510,12],["e","Croazia",301,503,550,16,"bold"],["e","Seghedino",1011,1165,243,12],["e","Oradea",1266,1369,126,12],["e","j-N",1488,1530,127,12],["e","Timișoara",1143,1307,360,13.5],["e","Novi Sad",983,1113,431,12],["e","Нови Сад",975,1123,474,12],["e","Belgrado",1062,1191,539,12],["e","Београд",1065,1191,582,12],["e","Bosnia ed",654,917,630,16,"bold"],["e","Erzegovina",640,935,691,16,"bold"],["e","Zara",424,490,734,12],["e","Sarajevo",795,937,791,13.5],["e","San Marino",-5,213,811,13,"bold"],["e","Spalato",557,667,874,12],["e","Serbia",1087,1258,780,16,"bold"],["e","Cr",1503,1535,687,12],["e","Niš",1290,1338,873,12],["e","Ниш",1279,1346,912,12],["e","Sofia",1454,1536,1001,13],["e","София",1440,1562,1046,13],["e","Italia",11,192,1030,21,"bold"],["e","Montenegro",865,1097,1047,13,"bold"],["e","Podgorica",836,963,1130,11],["e","Подгорица",819,963,1164,11],["e","Kosovo",1118,1258,1110,13,"bold"],["e","Roma",124,220,1264,13.5],["e","Macedonia",1184,1392,1298,13,"bold"],["e","(FYROM)",1202,1373,1343,13,"bold"],["e","Tirana",995,1098,1345,13.5],["e","Bari",637,700,1396,13.5],["e","Albania",976,1179,1453,16,"bold"],["e","Salonicco",1367,1535,1449,13.5],["e","Θεσσαλονίκη",1337,1570,1495,13.5],["e","Napoli",282,387,1453,13.5],["e","Pompei",317,411,1539,11],["e","Matera",530,625,1528,11.5],["e","Taranto",663,775,1537,12],["e","Lecce",794,880,1561,12],["e","Grecia",1316,1488,1587,16,"bold"],["e","Patrasso",1230,1359,1960,12],["e","Πάτρα",1246,1342,2001,12],["e","Ατ",1499,1532,2002,13],["e","Αθ",1497,1535,2048,13],["e","Reggio",461,561,1988,12],["e","Calabria",453,573,2028,12],["e","Palermo",149,287,2027,13.5],["e","Catania",377,504,2152,13.5],["e","Trapani",0,103,2085,12],["e","Marsala",41,159,2163,12],["e","Sicilia",252,332,2163,12,"ital"],["e","Siracusa",402,528,2241,12],["e","Archea",1236,1323,2186,11],["e","Olympia",1228,1329,2222,11],["e","Αρχαία",1233,1323,2257,11],["e","Ολυμπία",1225,1334,2292,11]
];
const CITIES = {
  w: [[144,364],[386,375],[617,380],[789,276],[735,514],[991,540],[1193,448],[1429,457],[1548,463],[1161,690],[1477,672],[554,820],[166,871],[489,871],[686,939],[903,883],[1354,845],[1465,835],[351,1229],[265,1359],[142,1417],[326,1747],[1182,1820],[386,2333,1],[1322,2314,1]],
  e: [[485,74],[1317,79],[1089,264],[1226,384],[272,407],[84,455],[1049,495],[457,755],[612,895],[1315,934],[668,1416],[335,1473],[365,1496],[634,1512],[717,1556],[835,1582],[1449,1520],[1292,2024],[511,2048],[219,2049],[113,2068],[99,2115],[439,2174],[466,2261],[1277,2144],[553,367,1],[1127,604,1],[866,817,1],[977,1133,1],[1497,1074,1],[108,1247,1],[1047,1371,1]]
};

/* local roads and woodland texture, from a fixed seed */
function texture() {
  let seed = 7;
  const rnd = () => { seed = (seed * 16807) % 2147483647; return seed / 2147483647; };
  let lanes = "", specks = "", shade = "";
  for (let i = 0; i < 900; i++) {
    let x = 314 + rnd() * 1052, y = 299 + rnd() * 668, a = rnd() * 6.28;
    lanes += `M${x.toFixed(1)} ${y.toFixed(1)}`;
    for (let j = 0; j < 9; j++) { a += (rnd() - .5) * 1.3; x += Math.cos(a) * 5; y += Math.sin(a) * 5; lanes += `L${x.toFixed(1)} ${y.toFixed(1)}`; }
  }
  for (let i = 0; i < 520; i++) {
    const x = 314 + rnd() * 1052, y = 299 + rnd() * 668, r = 1.5 + rnd() * 5;
    for (let j = 0; j < 8; j++) { const t = j * .785, q = r * (.5 + rnd()); specks += `${j ? "L" : "M"}${(x + Math.cos(t) * q).toFixed(1)} ${(y + Math.sin(t) * q * 1.2).toFixed(1)}`; }
    specks += "Z";
  }
  for (let i = 0; i < 320; i++) {
    const x = rnd() * 760 + 800, y = rnd() * 660 + 90, d = rnd() * 30 + 12;
    shade += `M${x.toFixed(0)} ${y.toFixed(0)}l${d.toFixed(0)} ${(-d * (.4 + rnd())).toFixed(0)}l${(d * .5).toFixed(0)} ${(d * .3).toFixed(0)}`;
  }
  return { lanes, specks, shade };
}
const TEX = texture();
const poly = (tag, cls, list) => list.map(p => `<${tag} class="${cls}" points="${p}"/>`).join("");
const sheets = draw => ["w", "e"].map(s => `<g transform="${matrix(s)}">${draw(s)}</g>`).join("");

function mapSvg(id) {
  const clip = ["w", "e"].map(s => LAND[s].map(p => `<polygon transform="${matrix(s)}" points="${p}"/>`).join("")).join("");
  const labels = LABELS.map(([s, t, a, b, y, size, cls = ""]) => `<text class="label ${cls}" x="${px(s, a).toFixed(1)}" y="${py(y).toFixed(1)}" font-size="${size}" textLength="${((b - a) * SHEET[s].k).toFixed(1)}" lengthAdjust="${cls === "bold" ? "spacing" : "spacingAndGlyphs"}">${t}</text>`).join("");
  const cities = ["w", "e"].map(s => CITIES[s].map(([x, y, cap]) => {
    const c = `cx="${px(s, x).toFixed(1)}" cy="${py(y).toFixed(1)}"`;
    return cap ? `<circle class="city" ${c} r="3.700"/><circle ${c} r="2.100" fill="#222"/>` : `<circle class="city" ${c} r="3"/>`;
  }).join("")).join("");
  return `<svg width="1051.7" height="668" viewBox="314.300 299 1051.700 668">
  <defs><clipPath id="land-${id}">${clip}</clipPath><path id="arc-${id}" d="M350 791Q400 735 495 736"/></defs>
  ${sheets(s => poly("polygon", "land", LAND[s]))}
  <g clip-path="url(#land-${id})">${sheets(s => poly("polygon", "relief", RELIEF[s]))}
    <g transform="${matrix("w")}"><path class="shade" d="${TEX.shade}"/></g>
    ${sheets(s => poly("polygon", "wood", WOOD[s]))}<path class="speck" d="${TEX.specks}"/>
    ${sheets(s => poly("polygon", "park", PARK[s]))}<path class="lane" d="${TEX.lanes}"/></g>
  ${sheets(s => poly("polygon", "lake", LAKE[s]))}
  <g fill="#a3ccff">${sheets(s => poly("polygon", "", SEA[s]))}</g>
  ${sheets(s => poly("polyline", "road", ROADS[s]))}${sheets(s => poly("polyline", "border", BORDERS[s]))}
  <g transform="${matrix("e")}"><polyline class="border dashed" points="${KOSOVO}"/></g>
  ${cities}${labels}
  <text class="label sea" font-size="12" transform="translate(344 769) rotate(-46)" textLength="87">Mare delle Baleari</text>
  <text class="label sea" font-size="12" transform="translate(982 567) rotate(38)" textLength="73">Mare Adriatico</text>
  <text class="label sea" font-size="12" transform="translate(1107 879) rotate(-39)" textLength="46">Mar Ionio</text>
  <text class="label arc" font-size="12.500"><textPath href="#arc-${id}" textLength="154">ILLES BALEARS</textPath></text></svg>
  <div class="ctl type">Mappa</div>
  <div class="ctl full"><svg width="25.200" height="24" viewBox="0 0 25.200 24"><path d="M5.500 9.500V5.500h4.500M15.500 5.500H20v4M20 14.500v4h-4.500M10 18.500H5.500v-4" fill="none" stroke="#666" stroke-width="2"/></svg></div>
  <div class="ctl peg"><svg width="27.700" height="27.600" viewBox="0 0 27.700 27.600"><circle cx="13.700" cy="6.500" r="3.100" fill="#f5b324"/><path d="M10 10q3.700-1.500 7.500 0l1.500 6.500-1.500.5-.6 5.500h-6.200l-.6-5.500-1.600-.5z" fill="#fbbc1f"/><path d="M11.300 9.800 13.700 13l2.500-3.200" fill="#e07a2c"/></svg></div>
  <div class="ctl zoom"><svg width="27.700" height="54.800" viewBox="0 0 27.700 54.800"><path d="M8.500 13.500h11M14 8v11M8.500 41.500h11" stroke="#666" stroke-width="2.600"/><path d="M4 27.500h19.700" stroke="#e3e3e3"/></svg></div>
  <div class="credits"><span>Dati mappa ©2017 GeoBasis-DE/BKG (©2009), Google, Inst. Geogr. Nacional, Mapa GISrael, ORION-ME</span><em>Termini e condizioni d'uso</em></div>`;
}

/* ---- charts: boxes are [left, top, right, bottom] ---- */
const SHARED = [[1179.6, 14.9, 1295.2, 93.3], [1233, 266, 1351.6, 282], [1.8, 298.1, 312, 1946], [303.6, 298.1, 1366, 968.4]];
const CHARTS = [
  { title: "Original Method: 15 boxes", cls: "original", boxes: [...SHARED, [19.5, 28.4, 183.2, 78.9], [233.4, 35.1, 707.4, 73], [19.5, 128.6, 356.3, 142.9], [13.6, 156.4, 299.6, 185], [26, 199.4, 790.7, 212.9], [13.6, 230.5, 119.9, 245.7], [618.3, 1768.9, 747.9, 1795.8], [638.6, 1803.4, 727.1, 1815.2], [332, 1827.8, 1032.7, 1852.3], [485.3, 1864.9, 878.9, 1889.3], [571.3, 1900.3, 793.3, 1912.1]] },
  { title: "Improved Method: 7 boxes", cls: "improved", boxes: [...SHARED, [19.5, 28.4, 707.4, 78.9], [13.6, 128.6, 790.7, 245.7], [332, 1768.9, 1032.7, 1912.1]] }
];
const ticks = (n, step) => Array.from({ length: n }, (_, i) => `<span>${i * step}</span>`).join("");
const rect = (cls, [l, t, r, b]) => `<rect class="${cls}" x="${l}" y="${t}" width="${(r - l).toFixed(1)}" height="${(b - t).toFixed(1)}"/>`;

CHARTS.forEach((chart, i) => {
  const node = document.getElementById("chart-template").content.cloneNode(true);
  const $ = q => node.querySelector(q);
  $(".chart-title").textContent = chart.title;
  $(".y-axis").innerHTML = ticks(8, 250);
  $(".x-axis").innerHTML = ticks(7, 200);
  $(".groups").innerHTML = GROUPS.map(groupHtml).join("");
  $(".map").innerHTML = mapSvg(i);
  $(".boxes").innerHTML = chart.boxes.map(b => rect(chart.cls, b)).join("") + rect("spine", [0, 0, 1366, 1946]);
  document.getElementById("figure").append(node);
});
```
